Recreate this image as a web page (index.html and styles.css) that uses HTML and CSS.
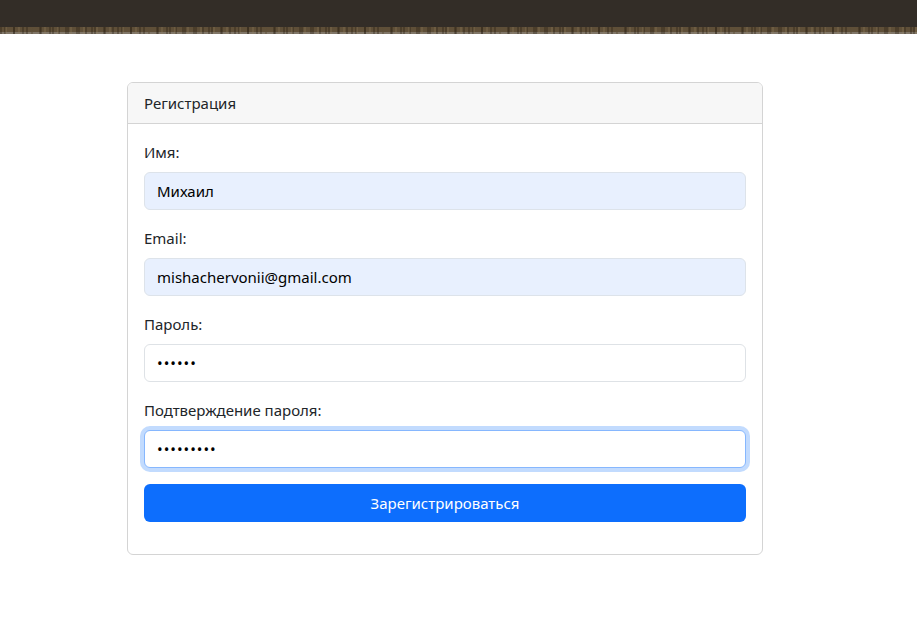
FILE: index.html
```html
<!DOCTYPE html>
<html lang="ru">
<head>
<meta charset="utf-8">
<title>Регистрация</title>
<link rel="stylesheet" href="styles.css">
</head>
<body>
<header class="topbar"><div class="topbar-edge"></div></header>
<main class="page">
  <section class="card">
    <div class="card-header">Регистрация</div>
    <form class="card-body">
      <div class="field">
        <label class="form-label">Имя:</label>
        <input class="form-control autofill" type="text" value="Михаил">
      </div>
      <div class="field">
        <label class="form-label">Email:</label>
        <input class="form-control autofill" type="text" value="mishachervonii@gmail.com">
      </div>
      <div class="field">
        <label class="form-label">Пароль:</label>
        <input class="form-control password" type="password" value="123456">
      </div>
      <div class="field">
        <label class="form-label">Подтверждение пароля:</label>
        <input class="form-control password focus" type="password" value="123456789">
      </div>
      <button class="btn" type="button">Зарегистрироваться</button>
    </form>
  </section>
</main>
</body>
</html>
```
FILE: styles.css
```css
* { box-sizing: border-box; }
html, body { margin: 0; padding: 0; background: #fff; }
body {
  font-family: "Noto Sans", "Open Sans", sans-serif;
  font-size: 15px;
  line-height: 24px;
  color: #212529;
}
.topbar {
  height: 34px;
  background: #332d27;
  display: flex;
  flex-direction: column;
  justify-content: flex-end;
}
.topbar-edge {
  height: 7px;
  background:
    repeating-linear-gradient(90deg, rgba(40,30,18,0.35) 0 2px, rgba(0,0,0,0) 2px 5px, rgba(150,130,95,0.25) 5px 7px, rgba(0,0,0,0) 7px 13px),
    repeating-linear-gradient(90deg, rgba(0,0,0,0) 0 4px, rgba(30,22,12,0.3) 4px 6px, rgba(0,0,0,0) 6px 9px),
    linear-gradient(#5f4f38 0 5px, #807668 5px 7px);
}
.page {
  padding: 48px 0 0 127px;
}
.card {
  width: 636px;
  border: 1px solid #d4d4d4;
  border-radius: 6px;
  background: #fff;
}
.card-header {
  padding: 8px 16px;
  background: #f7f7f7;
  border-bottom: 1px solid #d4d4d4;
  border-radius: 5px 5px 0 0;
}
.card-body {
  padding: 16px 16px 32px;
  display: flex;
  flex-direction: column;
  gap: 16px;
}
.field { display: flex; flex-direction: column; }
.form-label { margin-bottom: 8px; }
.form-control {
  height: 38px;
  padding: 6px 12px;
  font: inherit;
  font-size: 15px;
  color: #000;
  background: #fff;
  border: 1px solid #dee2e6;
  border-radius: 6px;
  outline: none;
}
.form-control.password { letter-spacing: 1px; }
.form-control.autofill { background: #e8f0fe; border-color: #dde3ea; }
.form-control.focus {
  border-color: #86b7fe;
  box-shadow: 0 0 0 4px rgba(13,110,253,0.25);
}
.btn {
  height: 38px;
  font: inherit;
  font-size: 15px;
  color: #fff;
  background: #0d6efd;
  border: 0;
  border-radius: 6px;
}
```
